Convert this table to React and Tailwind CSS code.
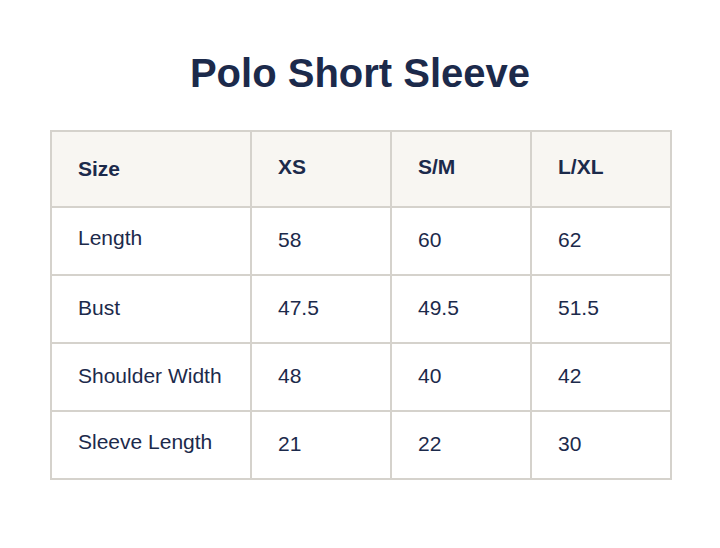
import React from "react";

const rows = [
  ["Length", "58", "60", "62", "pb-[6px]"],
  ["Bust", "47.5", "49.5", "51.5", "pb-[2px]"],
  ["Shoulder Width", "48", "40", "42", "pb-[2px]"],
  ["Sleeve Length", "21", "22", "30", "pb-[6px]"],
];

export default function App() {
  return (
    <div
      className="w-[720px] h-[548px] bg-white text-[#1c2a4b] pt-[50px]"
      style={{ fontFamily: '"Liberation Sans", Arial, sans-serif' }}
    >
      <h1 className="text-center text-[40px] font-bold leading-[46px]">Polo Short Sleeve</h1>
      <div className="ml-[50px] mt-[34px] w-[622px] grid grid-cols-[198px_138px_138px_138px] grid-rows-[74px_66px_66px_66px_66px] gap-[2px] p-[2px] bg-[#d5d2cc]">
        <div className="bg-[#f8f6f2] flex items-center pl-[26px] pb-[1px] text-[21px] font-bold">Size</div>
        <div className="bg-[#f8f6f2] flex items-center pl-[26px] pb-[4px] text-[21px] font-bold">XS</div>
        <div className="bg-[#f8f6f2] flex items-center pl-[26px] pb-[4px] text-[21px] font-bold">S/M</div>
        <div className="bg-[#f8f6f2] flex items-center pl-[26px] pb-[4px] text-[21px] font-bold">L/XL</div>
        {rows.map((r) => (
          <React.Fragment key={r[0]}>
            <div className={"bg-white flex items-center pl-[26px] text-[21px] " + (r[4] === "pb-[6px]" ? "pb-[6px]" : "pb-[2px]")}>{r[0]}</div>
            <div className="bg-white flex items-center pl-[26px] pb-[2px] text-[21px]">{r[1]}</div>
            <div className="bg-white flex items-center pl-[26px] pb-[2px] text-[21px]">{r[2]}</div>
            <div className="bg-white flex items-center pl-[26px] pb-[2px] text-[21px]">{r[3]}</div>
          </React.Fragment>
        ))}
      </div>
    </div>
  );
}
